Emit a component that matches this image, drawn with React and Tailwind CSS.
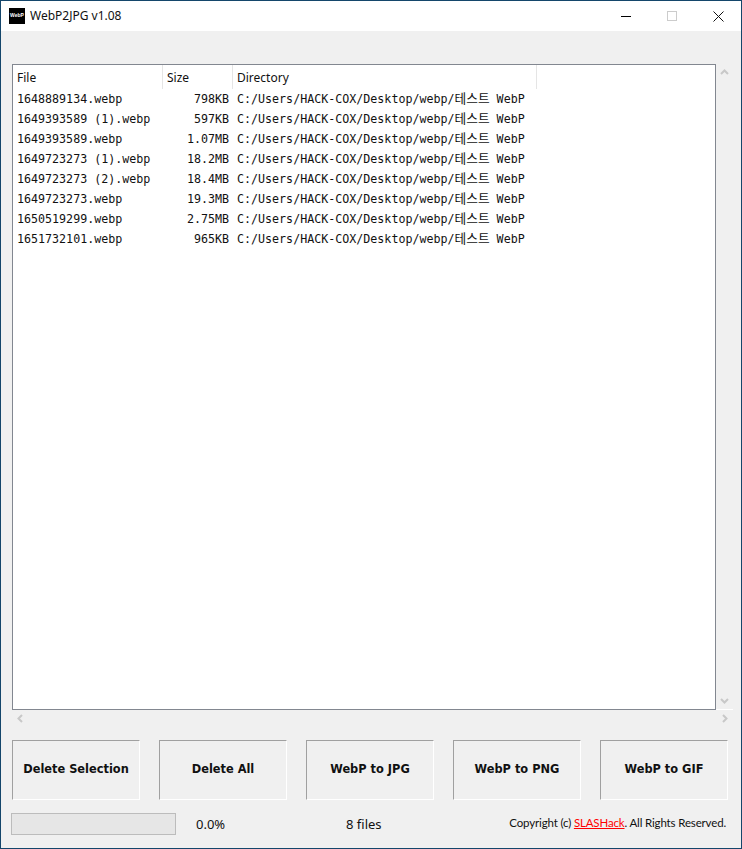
const files = [
  { name: "1648889134.webp", size: "798KB" },
  { name: "1649393589 (1).webp", size: "597KB" },
  { name: "1649393589.webp", size: "1.07MB" },
  { name: "1649723273 (1).webp", size: "18.2MB" },
  { name: "1649723273 (2).webp", size: "18.4MB" },
  { name: "1649723273.webp", size: "19.3MB" },
  { name: "1650519299.webp", size: "2.75MB" },
  { name: "1651732101.webp", size: "965KB" },
];

const buttons = ["Delete Selection", "Delete All", "WebP to JPG", "WebP to PNG", "WebP to GIF"];

const uiFont = "font-['Noto_Sans','Open_Sans',sans-serif]";
const monoFont = "font-['DejaVu_Sans_Mono','Noto_Sans_CJK_KR',monospace]";

function Chevron({ d }) {
  return (
    <svg width="9" height="9" viewBox="0 0 9 9" className="text-[#c8c8c8]">
      <path d={d} fill="none" stroke="currentColor" strokeWidth="2" />
    </svg>
  );
}

function TitleBar() {
  return (
    <div className="flex h-[30px] shrink-0 items-center bg-white">
      <div className="ml-[8px] flex h-[16px] w-[16px] items-center justify-center bg-black font-['Liberation_Sans',sans-serif] text-[5px] font-bold text-white">
        WebP
      </div>
      <span className={`ml-[5px] text-[12px] text-[#111] ${uiFont}`}>WebP2JPG v1.08</span>
      <div className="ml-auto flex h-full">
        <div className="flex w-[46px] items-center justify-center">
          <div className="h-px w-[10px] bg-black"></div>
        </div>
        <div className="flex w-[46px] items-center justify-center">
          <div className="h-[10px] w-[10px] border border-[#cccccc]"></div>
        </div>
        <div className="flex w-[46px] items-center justify-center">
          <svg width="11" height="11" viewBox="0 0 11 11">
            <path d="M0.5 0.5L10.5 10.5M10.5 0.5L0.5 10.5" stroke="#111" fill="none" />
          </svg>
        </div>
      </div>
    </div>
  );
}

function FileList() {
  return (
    <div className="ml-[11px] mr-[8px] mt-[33px] flex min-h-0 flex-1 flex-col">
      <div className="flex min-h-0 flex-1">
        <div className="min-w-0 flex-1 border border-[#828790] bg-white">
          <div className={`flex h-[24px] text-[12px] text-[#111] ${uiFont}`}>
            <div className="w-[150px] border-r border-[#e5e5e5] pl-[4px] leading-[26px]">File</div>
            <div className="w-[70px] border-r border-[#e5e5e5] pl-[4px] leading-[26px]">Size</div>
            <div className="w-[304px] border-r border-[#e5e5e5] pl-[4px] leading-[26px]">Directory</div>
          </div>
          <div className={`text-[11.67px] leading-[20px] text-[#111] ${monoFont}`}>
            {files.map((file) => (
              <div key={file.name} className="flex h-[20px] whitespace-nowrap">
                <div className="w-[150px] pl-[4px]">{file.name}</div>
                <div className="w-[70px] pr-[4px] text-right">{file.size}</div>
                <div className="w-[304px] pl-[4px]">
                  C:/Users/HACK-COX/Desktop/webp/<span className="text-[12.7px] leading-none">테스트</span> WebP
                </div>
              </div>
            ))}
          </div>
        </div>
        <div className="flex w-[17px] shrink-0 flex-col items-center justify-between border-b border-white py-[4px]">
          <Chevron d="M1 6L4.5 2.5L8 6" />
          <Chevron d="M1 3L4.5 6.5L8 3" />
        </div>
      </div>
      <div className="flex h-[17px] w-[721px] shrink-0 items-center justify-between px-[4px]">
        <Chevron d="M6 1L2.5 4.5L6 8" />
        <Chevron d="M3 1L6.5 4.5L3 8" />
      </div>
    </div>
  );
}

function ActionButtons() {
  return (
    <div className="mx-[11px] mt-[13px] flex shrink-0 gap-[19px]">
      {buttons.map((label) => (
        <div
          key={label}
          className="flex h-[60px] w-[128px] items-center justify-center border border-[#a0a0a0] border-r-white border-b-white font-['DejaVu_Sans',sans-serif] text-[11.4px] font-bold text-[#111]"
        >
          {label}
        </div>
      ))}
    </div>
  );
}

function StatusBar() {
  return (
    <div className={`mx-[10px] mt-[12px] mb-[13px] flex h-[23px] shrink-0 items-center text-[13px] text-[#111] ${uiFont}`}>
      <div className="h-[22px] w-[165px] border border-[#bcbcbc] bg-[#e6e6e6]"></div>
      <div className="ml-[20px] w-[150px] translate-y-px">0.0%</div>
      <div className="translate-y-px">8 files</div>
      <div className="ml-auto mr-[5px] -translate-y-px font-['Lato',sans-serif] text-[11.5px] tracking-[-0.15px]">
        Copyright (c) <span className="text-[#ff0000] underline">SLASHack</span>. All Rights Reserved.
      </div>
    </div>
  );
}

export default function App() {
  return (
    <div className="flex h-[849px] w-[742px] flex-col overflow-hidden border border-[#14466b] bg-[#f0f0f0]">
      <TitleBar />
      <FileList />
      <ActionButtons />
      <StatusBar />
    </div>
  );
}
